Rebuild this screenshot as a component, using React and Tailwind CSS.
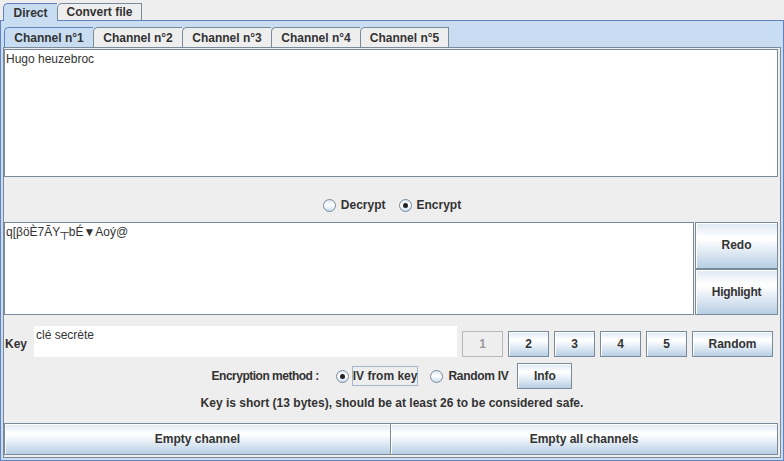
import React, { useState } from 'react';

const font = "font-['Liberation_Sans',Arial,sans-serif]";
const btn =
	'border border-[#7A8A99] bg-[linear-gradient(to_bottom,#DDE8F3_0%,#FFFFFF_32%,#FFFFFF_36%,#B8CFE5_100%)] shadow-[inset_1px_1px_0_#FFFFFF] text-[#333333] font-bold text-[12px] flex items-center justify-center';

const Radio = ({ checked, label, focused, tight, onClick }) => (
	<label className="flex items-center cursor-default" onClick={onClick}>
		<span className="w-[13px] h-[13px] rounded-full border border-[#7A8A99] bg-[linear-gradient(to_bottom,#DDE8F3,#FFFFFF_45%,#C8DDF2)] flex items-center justify-center">
			{checked && <span className="w-[5px] h-[5px] rounded-full bg-[#222222]" />}
		</span>
		<span
			className={
				'text-[12px] font-bold text-[#333333] leading-[18px] ' +
				(focused ? 'ml-[3px] border border-[#A3B8CC] px-0' : 'ml-[5px]') +
				(tight ? ' tracking-[-0.3px]' : '')
			}>
			{label}
		</span>
	</label>
);

const App = () => {
	const [mode, setMode] = useState('encrypt');
	const [iv, setIv] = useState('key');
	const channels = ['Channel n°1', 'Channel n°2', 'Channel n°3', 'Channel n°4', 'Channel n°5'];

	return (
		<div className={`w-[784px] h-[461px] bg-[#EEEEEE] flex flex-col overflow-hidden ${font}`}>
			{/* outer tabs */}
			<div className="h-[20px] flex items-end pl-[3px]">
				<div className="relative z-10 -mb-[1px] h-[18px] w-[54px] bg-[#C8DDF2] border-t border-l border-[#6382BF] rounded-tl-[5px] flex items-center justify-center text-[12px] font-bold text-[#333333]">
					Direct
				</div>
				<div className="h-[17px] w-[85px] border-t border-l border-r border-[#7A8A99] rounded-tl-[5px] flex items-center justify-center text-[12px] font-bold text-[#333333]">
					Convert file
				</div>
			</div>

			<div className="flex-1 flex flex-col bg-[#C8DDF2] border border-[#6382BF] px-[2px] pb-[2px]">
				{/* inner tabs */}
				<div className="h-[26px] flex items-end pl-[1px]">
					{channels.map((c, i) => (
						<div
							key={c}
							className={
								'h-[20px] w-[89px] border-t border-l rounded-tl-[5px] flex items-center justify-center text-[12px] font-bold text-[#333333] ' +
								(i === 0 ? 'bg-[#C8DDF2] border-[#6382BF]' : 'bg-[#EEEEEE] border-[#7A8A99]') +
								(i === channels.length - 1 ? ' border-r' : '')
							}>
							{c}
						</div>
					))}
				</div>

				<div className="flex-1 flex flex-col bg-[#EEEEEE] border border-[#7A8A99]">
					<div className="mt-[1px] mr-[2px] h-[128px] border border-[#7A8A99] bg-white px-[1px] pt-[2px] text-[12px] text-[#333333] leading-[14px]">
						Hugo heuzebroc
					</div>

					<div className="h-[45px] pt-[11px] flex items-center justify-center gap-[13px]">
						<Radio checked={mode === 'decrypt'} label="Decrypt" onClick={() => setMode('decrypt')} />
						<Radio checked={mode === 'encrypt'} label="Encrypt" onClick={() => setMode('encrypt')} />
					</div>

					<div className="h-[93px] flex mr-[2px]">
						<div className="w-[690px] border border-[#7A8A99] bg-white px-[1px] pt-[2px] text-[12px] text-[#333333] leading-[14px] font-['Liberation_Sans','DejaVu_Sans',sans-serif]">
							q[βöÈ7ÃY┬bÉ▼Aoý@
						</div>
						<div className="ml-[1px] flex-1 flex flex-col">
							<button className={`${btn} flex-1`}>Redo</button>
							<button className={`${btn} flex-1 tracking-[-0.3px]`}>Highlight</button>
						</div>
					</div>

					<div className="mt-[11px] h-[31px] flex items-end">
						<span className="self-start mt-[11px] ml-[1px] w-[29px] text-[12px] font-bold text-[#333333] leading-[14px]">Key</span>
						<div className="w-[423px] h-[31px] bg-white px-[2px] pt-[2px] text-[12px] text-[#333333] leading-[14px] self-start">
							clé secrète
						</div>
						<div className="ml-[5px] flex gap-[5px]">
							<button className="w-[41px] h-[26px] border border-[#B8B8B8] bg-[#EEEEEE] text-[12px] font-bold text-[#999999] flex items-center justify-center">
								1
							</button>
							{['2', '3', '4', '5'].map((n) => (
								<button key={n} className={`${btn} w-[41px] h-[26px]`}>
									{n}
								</button>
							))}
							<button className={`${btn} w-[81px] h-[26px]`}>Random</button>
						</div>
					</div>

					<div className="mt-[6px] h-[26px] flex items-center justify-center">
						<span className="text-[12px] font-bold text-[#333333] mr-[17px] tracking-[-0.5px]">Encryption method :</span>
						<Radio checked={iv === 'key'} focused label="IV from key" onClick={() => setIv('key')} />
						<span className="w-[12px]" />
						<Radio checked={iv === 'random'} tight label="Random IV" onClick={() => setIv('random')} />
						<button className={`${btn} ml-[9px] w-[55px] h-[26px]`}>Info</button>
					</div>

					<div className="mt-[7px] text-center text-[12px] font-bold text-[#333333] leading-[14px]">
						Key is short (13 bytes), should be at least 26 to be considered safe.
					</div>

					<div className="mt-auto mb-[2px] mr-[2px] h-[32px] flex">
						<button className={`${btn} w-[387px]`}>Empty channel</button>
						<button className={`${btn} flex-1 -ml-[1px]`}>Empty all channels</button>
					</div>
				</div>
			</div>
		</div>
	);
};

export default App;
